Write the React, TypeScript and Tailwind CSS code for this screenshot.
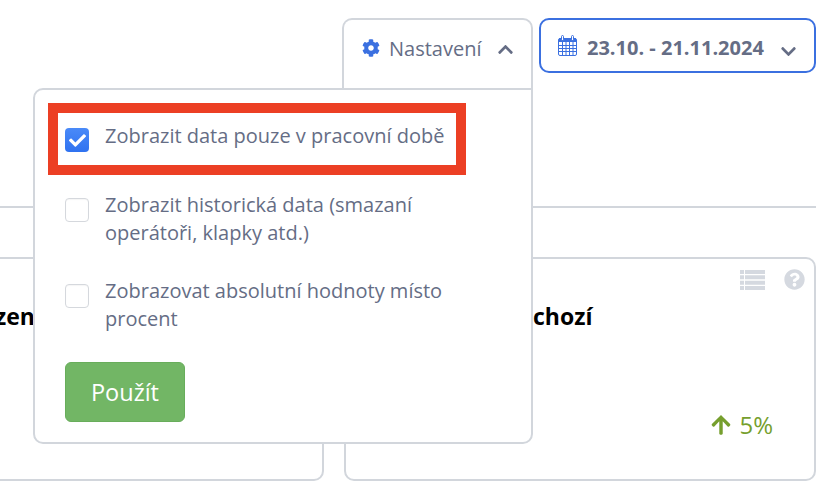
import React from 'react';
import { FaCog, FaChevronUp, FaChevronDown, FaQuestionCircle, FaArrowUp, FaCheck } from 'react-icons/fa';

const OPTIONS = [
  'Zobrazit historická data (smazaní operátoři, klapky atd.)',
  'Zobrazovat absolutní hodnoty místo procent',
];

function Checkbox({ checked }: { checked?: boolean }) {
  if (checked) {
    return (
      <span className="flex items-center justify-center w-6 h-6 shrink-0 rounded-[4px] bg-gradient-to-b from-[#4a8af8] to-[#2f72f0]">
        <FaCheck className="text-white text-[17px]" />
      </span>
    );
  }
  return <span className="block w-6 h-6 shrink-0 rounded-[4px] border border-[#d5d8dd] bg-white shadow-[inset_0_1px_1px_rgba(0,0,0,0.04)]" />;
}

function CalendarIcon() {
  return (
    <svg width="19" height="21" viewBox="0 0 19 21" fill="none" stroke="#3b70e0" className="mt-[1px] shrink-0">
      <rect x="0.5" y="3.5" width="18" height="17" rx="1.5" />
      <rect x="1" y="3" width="17" height="4" fill="#3b70e0" stroke="none" />
      <path d="M1 10.5H18M1 13.5H18M1 16.5H18M4.5 7V20M8 7V20M11.5 7V20M15 7V20" strokeWidth="1" />
      <rect x="3.5" y="0.5" width="2" height="5" rx="1" fill="#fff" />
      <rect x="13.5" y="0.5" width="2" height="5" rx="1" fill="#fff" />
    </svg>
  );
}

function ListIcon() {
  return (
    <svg width="25" height="20" viewBox="0 0 25 20" fill="#d5d9e0">
      <path d="M0 0h4v4H0zM5 0h20v4H5zM0 5.3h4v4H0zM5 5.3h20v4H5zM0 10.7h4v4H0zM5 10.7h20v4H5zM0 16h4v4H0zM5 16h20v4H5z" />
    </svg>
  );
}

export default function App() {
  return (
    <div className="relative w-[834px] h-[498px] overflow-hidden bg-white font-['Open_Sans',sans-serif]">
      {/* Header buttons */}
      <div className="flex justify-end gap-[6px] pt-[18px] pr-[18px]">
        <div className="flex items-start w-[191px] h-[72px] pt-[15px] pl-[18px] bg-white border-2 border-b-0 border-[#d2d6dc] rounded-t-[10px]">
          <FaCog className="text-[#3b70e0] text-[18px] mt-[4px]" />
          <span className="ml-[9px] text-[20px] leading-[27px] text-[#656d85]">Nastavení</span>
          <FaChevronUp className="ml-[16px] mt-[6px] text-[#656d85] text-[17px]" />
        </div>
        <div className="flex items-start w-[277px] h-[55px] pt-[14px] pl-[17px] border-2 border-[#3b70e0] rounded-[10px]">
          <CalendarIcon />
          <span className="ml-[10px] text-[20px] leading-[27px] font-bold text-[#656d85]">23.10. - 21.11.2024</span>
          <FaChevronDown className="ml-[16px] mt-[9px] text-[#656d85] text-[17px]" />
        </div>
      </div>

      {/* Divider */}
      <div className="mt-[116px] mr-[18px] h-[2px] bg-[#d2d6dc]" />

      {/* Cards */}
      <div className="flex gap-[20px] mt-[49px] pr-[18px]">
        <div className="w-[325px] h-[224px] -ml-px bg-white border-2 border-l-0 border-[#d2d6dc] rounded-r-[10px] overflow-hidden">
          <p className="pt-[44px] -ml-[4px] text-[23px] leading-[26px] font-bold text-black whitespace-nowrap">zen</p>
        </div>
        <div className="relative flex-1 h-[224px] bg-white border-2 border-[#d2d6dc] rounded-[10px]">
          <div className="absolute top-[10px] right-[9px] flex items-center gap-[19px]">
            <ListIcon />
            <FaQuestionCircle className="text-[21px] text-[#d5d9e0]" />
          </div>
          <p className="pl-[187px] pt-[44px] text-[23px] leading-[26px] font-bold text-black">chozí</p>
          <div className="absolute left-[42px] top-[136px] text-[49px] leading-[60px] text-[#8fb2f5] whitespace-nowrap">33 %</div>
          <div className="absolute right-[41px] top-[152px] flex items-center gap-[7px] text-[#769f2e]">
            <FaArrowUp className="text-[22px]" />
            <span className="text-[24px] leading-[28px]">5%</span>
          </div>
        </div>
      </div>

      {/* Settings popover */}
      <div className="absolute left-[33px] top-[88px] w-[500px] h-[356px] bg-white border-2 border-[#d2d6dc] rounded-b-[10px] rounded-tl-[10px] pl-[30px] text-[20px] leading-[28px] text-[#656d85]">
        <div className="flex gap-[16px] pt-[38px]">
          <Checkbox checked />
          <span className="-mt-[6px]">Zobrazit data pouze v pracovní době</span>
        </div>
        <div className="mt-[46px] flex flex-col gap-[37px]">
          {OPTIONS.map((o) => (
            <div key={o} className="flex gap-[16px] pr-[60px]">
              <Checkbox />
              <span className="-mt-[7px]">{o}</span>
            </div>
          ))}
        </div>
        <button className="block mt-[29px] w-[120px] h-[60px] rounded-[6px] bg-[#72b665] border border-[#68ad5b] text-[23.5px] text-white">
          Použít
        </button>
      </div>

      {/* Highlight annotation */}
      <div className="absolute left-[48px] top-[103px] w-[418px] h-[72px] border-[10px] border-[#ec3f24]" />
    </div>
  );
}
